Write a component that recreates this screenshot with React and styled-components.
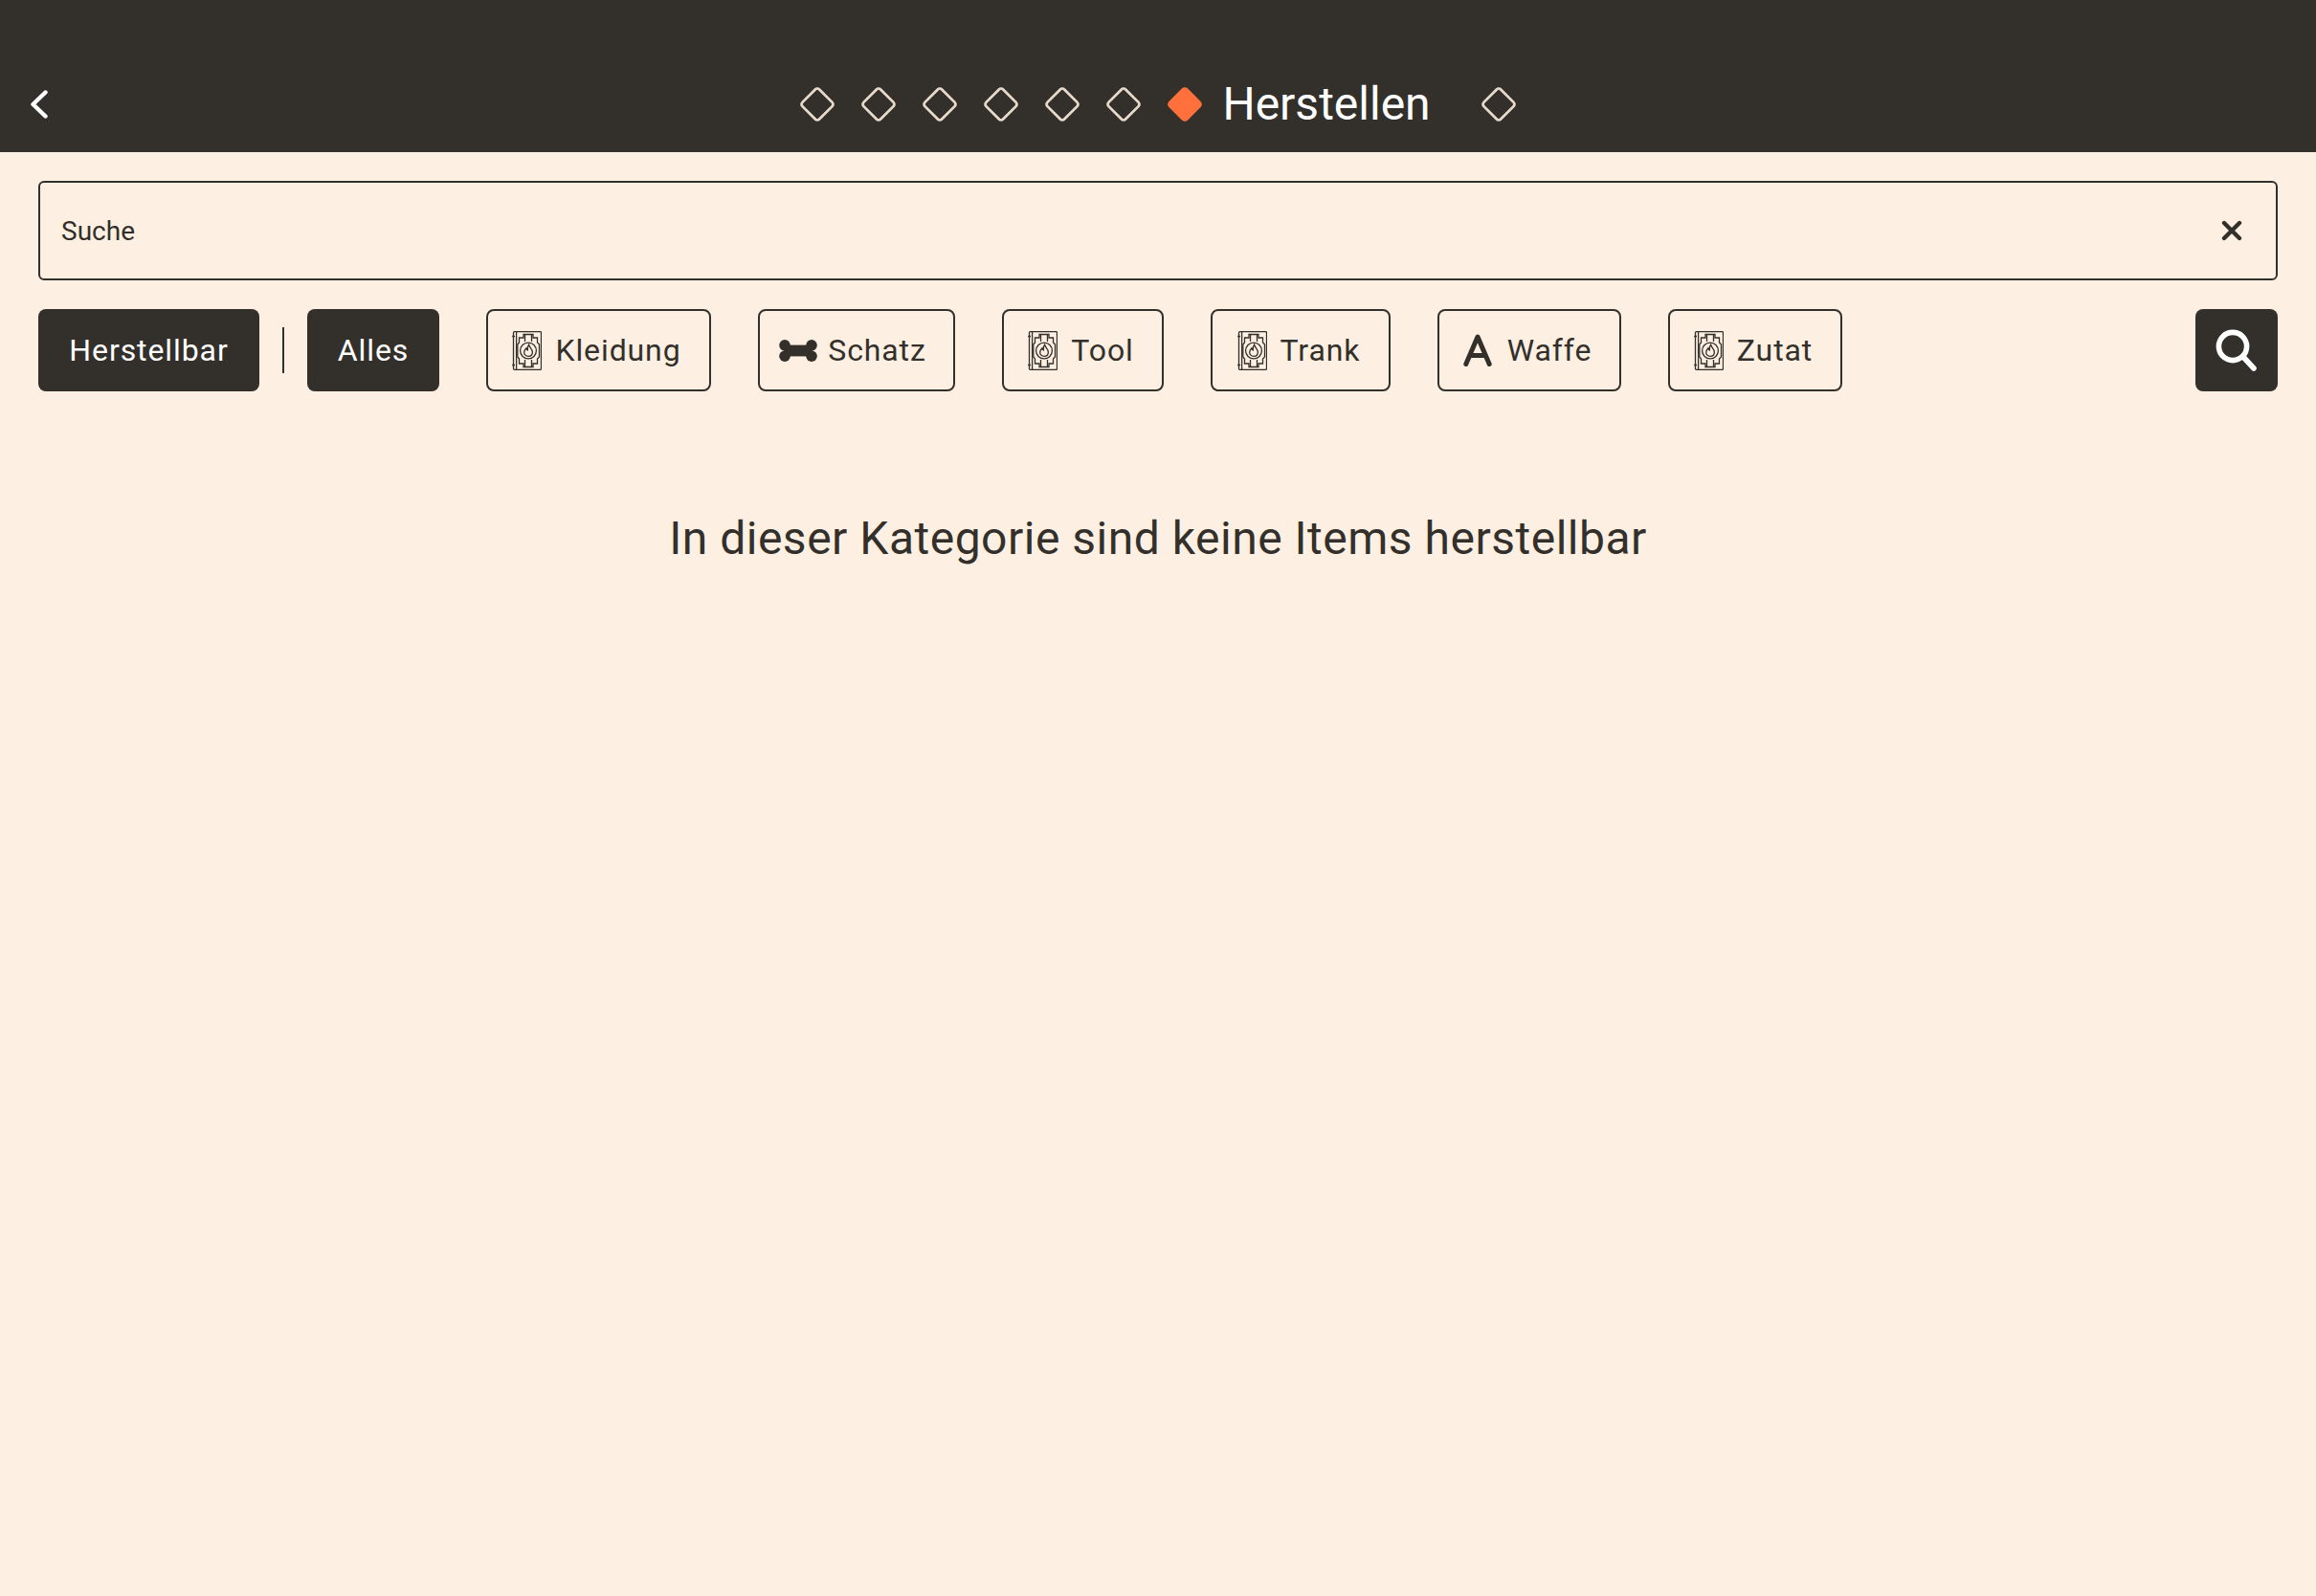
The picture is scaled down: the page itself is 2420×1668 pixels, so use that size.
import styled, { createGlobalStyle } from "styled-components";

const DARK = "#33302b";
const CREAM = "#fdefe2";

const categories = [
  { label: "Kleidung", icon: "book", width: 235 },
  { label: "Schatz", icon: "bone", width: 206 },
  { label: "Tool", icon: "book", width: 169 },
  { label: "Trank", icon: "book", width: 188 },
  { label: "Waffe", icon: "letter", width: 192 },
  { label: "Zutat", icon: "book", width: 182 },
];

const GlobalStyle = createGlobalStyle`
  html, body {
    margin: 0;
    padding: 0;
    background: ${CREAM};
  }
  * {
    box-sizing: border-box;
  }
`;

const BookIcon = () => (
  <svg width="31" height="41" viewBox="0 0 31 41" fill="none" stroke={DARK} strokeWidth="1.3">
    <rect x="1.5" y="0.7" width="29" height="39.6" rx="1" />
    <path d="M4.6 0.7V40.3" />
    <path d="M0.2 5.5H3M0.2 35.5H3" strokeWidth="1.5" />
    <path d="M12 3.5H22V7H26.5V12L28.5 14V27L26.5 29V34H22V37.5H12V34H7.5V29L5.8 27V14L7.5 12V7H12Z" />
    <path d="M13.5 3.5V11M20.5 3.5V11M13.5 30V37.5M20.5 30V37.5" />
    <circle cx="17" cy="20.5" r="8.4" />
    <path d="M17.6 14.2C18 17 21.4 18.6 21.4 22C21.4 24.6 19.6 26.3 17 26.3C14.5 26.3 12.7 24.6 12.7 22.2C12.7 20.2 13.8 19 14.8 17.9C15.1 19.2 15.6 19.8 16.3 20C16 17.9 16.5 15.9 17.6 14.2Z" />
  </svg>
);

const BoneIcon = () => (
  <svg width="40" height="23" viewBox="0 0 40 23" fill={DARK}>
    <circle cx="6" cy="5.8" r="5.8" />
    <circle cx="6" cy="17.2" r="5.8" />
    <circle cx="34" cy="5.8" r="5.8" />
    <circle cx="34" cy="17.2" r="5.8" />
    <rect x="5" y="5.6" width="30" height="11.8" />
  </svg>
);

const LetterIcon = () => (
  <svg width="30" height="34" viewBox="0 0 30 34" fill="none" stroke={DARK} strokeWidth="5" strokeLinecap="round" strokeLinejoin="round">
    <path d="M2.8 31.5L15 3L27.2 31.5" />
    <path d="M7.5 22.5H22.5" />
  </svg>
);

const CategoryIcon = ({ type }) => {
  if (type === "bone") return <BoneIcon />;
  if (type === "letter") return <LetterIcon />;
  return <BookIcon />;
};

const Diamond = ({ active }) => (
  <svg width="40" height="40" viewBox="0 0 40 40">
    <rect
      x="7.5"
      y="7.5"
      width="25"
      height="25"
      rx="3"
      transform="rotate(45 20 20)"
      fill={active ? "#ff703c" : "none"}
      stroke={active ? "#ff703c" : "#e8dacb"}
      strokeWidth="2.8"
    />
  </svg>
);

export default function App() {
  return (
    <Page>
      <GlobalStyle />
      <Header>
        <BackButton>
          <svg width="20" height="30" viewBox="0 0 20 30" fill="none" stroke="#fff" strokeWidth="4.4" strokeLinecap="round" strokeLinejoin="round">
            <path d="M16.5 2.5L3.5 15L16.5 27.5" />
          </svg>
        </BackButton>
        <Steps>
          {[0, 1, 2, 3, 4, 5].map((i) => (
            <Step key={i}>
              <Diamond />
            </Step>
          ))}
          <Step>
            <Diamond active />
          </Step>
          <StepTitle>Herstellen</StepTitle>
          <Step>
            <Diamond />
          </Step>
        </Steps>
      </Header>
      <Content>
        <SearchBox>
          <SearchLabel>Suche</SearchLabel>
          <svg width="22" height="22" viewBox="0 0 22 22" fill="none" stroke={DARK} strokeWidth="4.4" strokeLinecap="round">
            <path d="M3 3L19 19M19 3L3 19" />
          </svg>
        </SearchBox>
        <Filters>
          <FilledButton $width={231}>Herstellbar</FilledButton>
          <Divider />
          <FilledButton $width={138}>Alles</FilledButton>
          {categories.map((c) => (
            <CategoryButton key={c.label} $width={c.width} $icon={c.icon}>
              <CategoryIcon type={c.icon} />
              {c.label}
            </CategoryButton>
          ))}
          <SearchButton>
            <svg width="44" height="44" viewBox="0 0 44 44" fill="none" stroke="#fff" strokeWidth="5.6" strokeLinecap="round">
              <circle cx="18" cy="18" r="14.6" />
              <path d="M29 29L40 41" />
            </svg>
          </SearchButton>
        </Filters>
        <EmptyText>In dieser Kategorie sind keine Items herstellbar</EmptyText>
      </Content>
    </Page>
  );
}

const Page = styled.div`
  min-height: 100vh;
  background: ${CREAM};
  color: ${DARK};
  font-family: Roboto, "Liberation Sans", sans-serif;
`;

const Header = styled.header`
  display: grid;
  grid-template-columns: 1fr auto 1fr;
  align-items: center;
  height: 159px;
  padding-top: 58px;
  background: ${DARK};
`;

const BackButton = styled.div`
  display: flex;
  align-items: center;
  margin-left: 31px;
`;

const Steps = styled.nav`
  display: flex;
  align-items: center;
`;

const Step = styled.span`
  display: flex;
  justify-content: center;
  width: 64px;
`;

const StepTitle = styled.span`
  margin: 0 39px 0 7px;
  padding-top: 1px;
  font-size: 48px;
  line-height: 1;
  color: #fff;
`;

const Content = styled.main`
  padding: 30px 40px 0;
`;

const SearchBox = styled.div`
  display: flex;
  align-items: center;
  justify-content: space-between;
  height: 104px;
  padding: 0 35px 0 22px;
  border: 2px solid ${DARK};
  border-radius: 6px;
`;

const SearchLabel = styled.span`
  font-size: 28px;
`;

const Filters = styled.div`
  display: flex;
  align-items: center;
  gap: 49px;
  margin-top: 30px;
`;

const FilledButton = styled.div`
  display: flex;
  align-items: center;
  justify-content: center;
  width: ${(p) => p.$width}px;
  height: 86px;
  border-radius: 8px;
  background: ${DARK};
  color: #fff;
  font-size: 32px;
  letter-spacing: 0.9px;
`;

const Divider = styled.div`
  width: 2px;
  height: 48px;
  margin: 0 -25px;
  background: ${DARK};
`;

const CategoryButton = styled.div`
  display: flex;
  align-items: center;
  justify-content: center;
  gap: ${(p) => (p.$icon === "bone" ? 11 : p.$icon === "letter" ? 16 : 14)}px;
  width: ${(p) => p.$width}px;
  height: 86px;
  padding-right: ${(p) => (p.$icon === "bone" ? 8 : 4)}px;
  border: 2px solid ${DARK};
  border-radius: 8px;
  font-size: 32px;
  letter-spacing: 0.9px;
`;

const SearchButton = styled.div`
  display: flex;
  align-items: center;
  justify-content: center;
  width: 86px;
  height: 86px;
  margin-left: auto;
  border-radius: 8px;
  background: ${DARK};
`;

const EmptyText = styled.p`
  margin: 125px 0 0;
  text-align: center;
  font-size: 48px;
  line-height: 1.2;
  letter-spacing: 0.5px;
`;
